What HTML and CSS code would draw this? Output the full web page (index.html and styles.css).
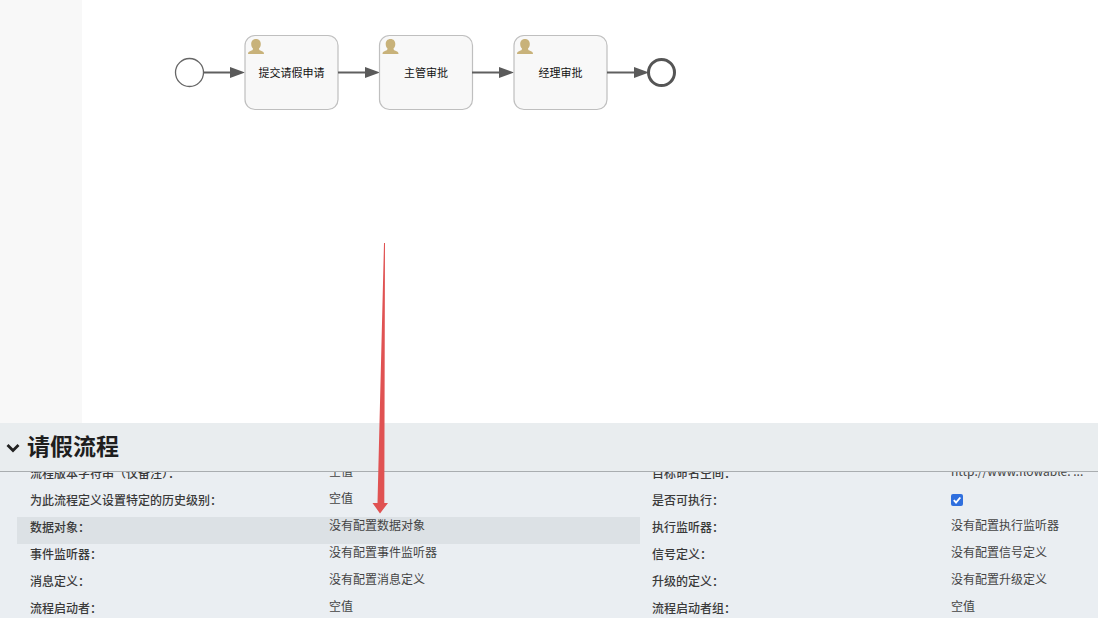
FILE: index.html
```html
<!DOCTYPE html>
<html lang="zh-CN">
<head>
<meta charset="utf-8">
<title>请假流程</title>
<link rel="stylesheet" href="styles.css">
</head>
<body>
<div class="page">
  <div class="workspace">
    <aside class="stripe"></aside>
    <main class="canvas">
      <svg class="diagram" width="1016" height="423" viewBox="82 0 1016 423">
        <defs>
          <path id="user" d="M0 0C3.200 0 4.800 2.200 4.800 5C4.800 7 4 8.500 3 9.500C3 11 4 11.500 5.500 12C7 12.500 8 13 8 15L-8 15C-8 13 -7 12.500 -5.500 12C-4 11.500 -3 11 -3 9.500C-4 8.500 -4.800 7 -4.800 5C-4.800 2.200 -3.200 0 0 0Z" fill="#c8b27a"/>
          <path id="head" d="M0 -5.500L15 0L0 5.500Z" fill="#5a5a5a"/>
        </defs>
        <circle class="start" cx="189.500" cy="72.500" r="14"/>
        <line class="flow" x1="204" y1="72.500" x2="232" y2="72.500"/>
        <use href="#head" x="230" y="72.500"/>
        <rect class="task" x="245" y="35.500" width="93" height="74" rx="10"/>
        <use href="#user" x="256" y="39"/>
        <text class="label" x="291.500" y="77">提交请假申请</text>
        <line class="flow" x1="338" y1="72.500" x2="366" y2="72.500"/>
        <use href="#head" x="365" y="72.500"/>
        <rect class="task" x="379.500" y="35.500" width="93" height="74" rx="10"/>
        <use href="#user" x="390.500" y="39"/>
        <text class="label" x="426" y="77">主管审批</text>
        <line class="flow" x1="472" y1="72.500" x2="501" y2="72.500"/>
        <use href="#head" x="499" y="72.500"/>
        <rect class="task" x="514" y="35.500" width="93" height="74" rx="10"/>
        <use href="#user" x="525" y="39"/>
        <text class="label" x="560.500" y="77">经理审批</text>
        <line class="flow" x1="607" y1="72.500" x2="636" y2="72.500"/>
        <use href="#head" x="634" y="72.500"/>
        <circle class="end" cx="661.500" cy="72.500" r="13"/>
      </svg>
    </main>
  </div>
  <section class="panel">
    <header class="panel-head">
      <svg class="chevron" width="14" height="10" viewBox="0 0 14 10"><path d="M1.500 2L7 7.500L12.500 2" fill="none" stroke="#222" stroke-width="2.800"/></svg>
      <h1 class="title">请假流程</h1>
    </header>
    <div class="panel-body">
      <div class="props">
        <div class="row"><div class="cell"><span class="key">流程版本字符串（仅备注）<span class="colon">：</span></span><span class="val">空值</span></div><div class="cell right"><span class="key">目标命名空间<span class="colon">：</span></span><span class="val">http://www.flowable. ...</span></div></div>
        <div class="row"><div class="cell"><span class="key">为此流程定义设置特定的历史级别<span class="colon">：</span></span><span class="val">空值</span></div><div class="cell right"><span class="key">是否可执行<span class="colon">：</span></span><span class="check"><svg width="12" height="12" viewBox="0 0 12 12"><path d="M2.800 6.200L5 8.500L9.300 3.500" fill="none" stroke="#fff" stroke-width="1.900"/></svg></span></div></div>
        <div class="row"><div class="cell hot"><span class="key">数据对象<span class="colon">：</span></span><span class="val">没有配置数据对象</span></div><div class="cell right"><span class="key">执行监听器<span class="colon">：</span></span><span class="val">没有配置执行监听器</span></div></div>
        <div class="row"><div class="cell"><span class="key">事件监听器<span class="colon">：</span></span><span class="val">没有配置事件监听器</span></div><div class="cell right"><span class="key">信号定义<span class="colon">：</span></span><span class="val">没有配置信号定义</span></div></div>
        <div class="row"><div class="cell"><span class="key">消息定义<span class="colon">：</span></span><span class="val">没有配置消息定义</span></div><div class="cell right"><span class="key">升级的定义<span class="colon">：</span></span><span class="val">没有配置升级定义</span></div></div>
        <div class="row"><div class="cell"><span class="key">流程启动者<span class="colon">：</span></span><span class="val">空值</span></div><div class="cell right"><span class="key">流程启动者组<span class="colon">：</span></span><span class="val">空值</span></div></div>
      </div>
    </div>
  </section>
  <svg class="annotation" width="30" height="280" viewBox="0 0 30 280"><path d="M19 0L20 0L19.300 260L23 260L15 270.500L7.500 260L12.500 260Z" fill="#e05252"/></svg>
</div>
</body>
</html>
```
FILE: styles.css
```css
* { box-sizing: border-box; }
html, body { margin: 0; height: 100%; overflow: hidden; background: #fff; }
body { font-family: "Noto Sans CJK SC", "Liberation Sans", sans-serif; color: #333; }
.page { position: relative; width: 1098px; height: 618px; overflow: hidden; display: flex; flex-direction: column; }
.workspace { height: 423px; display: flex; flex: none; }
.stripe { width: 82px; background: #f8f8f8; flex: none; }
.canvas { flex: 1; background: #fff; }
.diagram { display: block; }
.start { fill: #fff; stroke: #666; stroke-width: 1.300; }
.end { fill: #fff; stroke: #555; stroke-width: 3; }
.flow { stroke: #5f5f5f; stroke-width: 2; }
.task { fill: #f8f8f8; stroke: #bfbfbf; stroke-width: 1.200; }
.label { font-size: 11px; fill: #111; text-anchor: middle; }
.panel { flex: 1; background: #eaeef2; display: flex; flex-direction: column; min-height: 0; }
.panel-head { height: 49px; flex: none; display: flex; align-items: center; padding: 0 0 4px 6px; gap: 7px; border-bottom: 1px solid #a9adb0; background: #e9edef; }
.chevron { margin-top: 6px; }
.title { margin: 0; font-size: 23px; line-height: 44px; font-weight: 700; color: #1e1e1e; }
.panel-body { flex: 1; overflow: hidden; min-height: 0; }
.props { margin-top: -9px; padding-left: 17px; }
.row { display: grid; grid-template-columns: 623px 1fr; height: 27px; }
.cell { display: grid; grid-template-columns: 299px 1fr; padding-left: 13px; align-items: start; font-size: 12px; height: 27px; }
.cell.right { padding-left: 12px; }
.hot { background: #dce1e5; }
.key { font-weight: 500; color: #3a3a3a; white-space: nowrap; line-height: 19px; }
.colon { font-family: "Noto Sans CJK TC", sans-serif; }
.val { color: #444; white-space: nowrap; line-height: 15px; }
.check { width: 12px; height: 12px; border-radius: 2px; background: #2f6fde; display: block; margin-top: 4px; }
.check svg { display: block; }
.annotation { position: absolute; left: 365px; top: 243px; }
```
